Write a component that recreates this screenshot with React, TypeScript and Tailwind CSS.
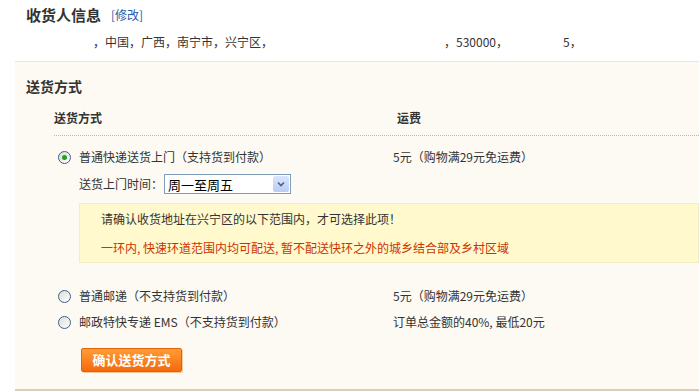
import React, { useState } from "react";

const font = "font-['Noto_Sans_CJK_SC','Noto_Sans',sans-serif]";

function Radio({ checked, onClick }: { checked: boolean; onClick: () => void }) {
  return (
    <button
      type="button"
      onClick={onClick}
      className="flex h-[13px] w-[13px] items-center justify-center rounded-full border border-[#3d5f86] bg-gradient-to-br from-[#dcdcd6] to-[#ffffff]"
    >
      {checked && <span className="h-[5px] w-[5px] rounded-full bg-[#21a121]" />}
    </button>
  );
}

export default function App() {
  const [method, setMethod] = useState("express");

  return (
    <div className={`h-[391px] w-[699px] overflow-hidden bg-white text-[12px] text-[#333] ${font}`}>
      {/* 收货人信息 */}
      <div className="h-[61px] pl-[26px] pt-[6px]">
        <div className="flex h-[18px] items-center">
          <span className="text-[15px] font-bold text-[#333]">收货人信息</span>
          <a className="ml-[10px] cursor-pointer text-[12px] text-[#1d5ea9]">[修改]</a>
        </div>
        <div className="mt-[10px] flex h-[16px] items-center text-[12px] text-[#333]">
          <span className="ml-[67px] w-[351px]">，中国，广西，南宁市，兴宁区，</span>
          <span className="w-[119px]">，530000，</span>
          <span>5，</span>
        </div>
      </div>

      {/* 送货方式 */}
      <div className="ml-[15px] h-[330px] border-b-2 border-t border-b-[#dccbb5] border-t-[#f2e3d2] bg-[#fdfaf3] pl-[11px]">
        <div className="mt-[14px] flex h-[20px] items-center text-[14px] font-bold text-[#333]">送货方式</div>

        <div className="ml-[28px]">
          <div className="mt-[12px] flex h-[20px] items-center font-bold text-[#333]">
            <span className="w-[343px]">送货方式</span>
            <span>运费</span>
          </div>
          <div className="mt-[7px] border-t border-dotted border-[#b9b9b9]" />

          <div className="mt-[11px] flex h-[20px] items-center">
            <div className="flex w-[339px] items-center">
              <span className="ml-[4px]">
                <Radio checked={method === "express"} onClick={() => setMethod("express")} />
              </span>
              <span className="ml-[8px]">普通快递送货上门（支持货到付款）</span>
            </div>
            <span>5元（购物满29元免运费）</span>
          </div>

          <div className="ml-[25px] mt-[7px] flex h-[20px] items-center">
            <span>送货上门时间：</span>
            <div className="ml-[1px] flex h-[20px] w-[127px] items-center border border-[#7f9db9] bg-white">
              <span className="flex-1 pl-[3px] text-[13px] leading-none text-black">周一至周五</span>
              <span className="mr-[1px] flex h-[16px] w-[16px] items-center justify-center rounded-[2px] bg-gradient-to-b from-[#dbe6fd] to-[#b8ccf6]">
                <svg width="8" height="6" viewBox="0 0 8 6">
                  <path d="M1 1.5 L4 4.5 L7 1.5" fill="none" stroke="#4d6185" strokeWidth="1.6" />
                </svg>
              </span>
            </div>
          </div>

          <div className="ml-[25px] mt-[9px] h-[60px] border border-[#f3edc6] bg-[#fff9cd] pl-[21px]">
            <div className="mt-[5px] flex h-[20px] items-center text-[#333]">
              请确认收货地址在兴宁区的以下范围内，才可选择此项！
            </div>
            <div className="mt-[9px] flex h-[20px] items-center text-[#cc3300]">
              一环内, 快速环道范围内均可配送, 暂不配送快环之外的城乡结合部及乡村区域
            </div>
          </div>

          <div className="mt-[23px] flex h-[20px] items-center">
            <div className="flex w-[339px] items-center">
              <span className="ml-[4px]">
                <Radio checked={method === "post"} onClick={() => setMethod("post")} />
              </span>
              <span className="ml-[8px]">普通邮递（不支持货到付款）</span>
            </div>
            <span>5元（购物满29元免运费）</span>
          </div>

          <div className="mt-[6px] flex h-[20px] items-center">
            <div className="flex w-[339px] items-center">
              <span className="ml-[4px]">
                <Radio checked={method === "ems"} onClick={() => setMethod("ems")} />
              </span>
              <span className="ml-[8px]">邮政特快专递 EMS（不支持货到付款）</span>
            </div>
            <span>订单总金额的40%, 最低20元</span>
          </div>

          <button
            type="button"
            className="ml-[27px] mt-[16px] flex h-[24px] w-[101px] items-center justify-center rounded-[2px] border border-[#e0620c] bg-gradient-to-b from-[#ff9c33] to-[#f4690a] text-[13px] font-bold text-white shadow-[1px_1px_0_#f5c9a0]"
          >
            确认送货方式
          </button>
        </div>
      </div>
    </div>
  );
}
